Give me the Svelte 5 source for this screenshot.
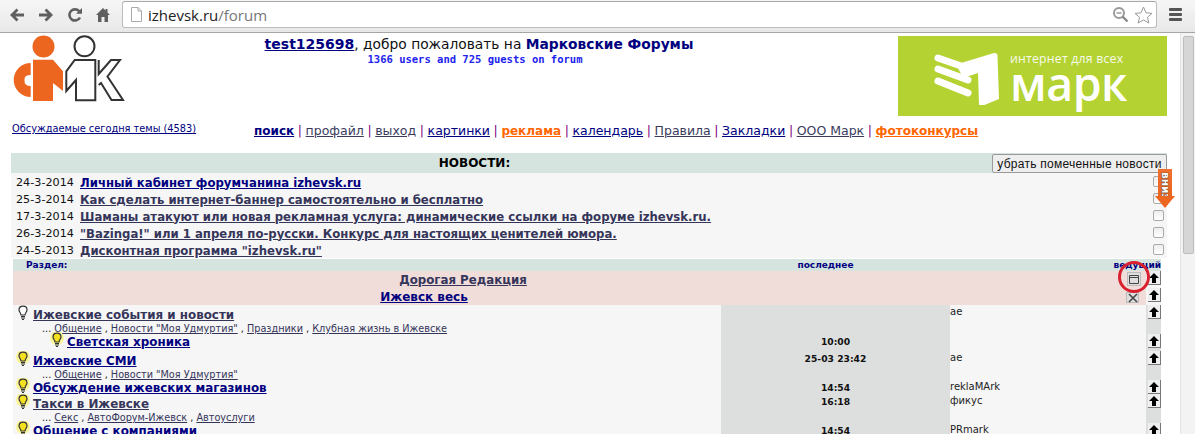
<script lang="ts">
  const navLinks = [
    { label: 'поиск', cls: 'strong' },
    { label: 'профайл', cls: 'visited' },
    { label: 'выход', cls: 'visited' },
    { label: 'картинки', cls: '' },
    { label: 'реклама', cls: 'hot' },
    { label: 'календарь', cls: '' },
    { label: 'Правила', cls: 'visited' },
    { label: 'Закладки', cls: '' },
    { label: 'ООО Марк', cls: 'visited' },
    { label: 'фотоконкурсы', cls: 'hot' }
  ];

  const news = [
    { date: '24-3-2014', title: 'Личный кабинет форумчанина izhevsk.ru', fresh: true },
    { date: '25-3-2014', title: 'Как сделать интернет-баннер самостоятельно и бесплатно' },
    { date: '17-3-2014', title: 'Шаманы атакуют или новая рекламная услуга: динамические ссылки на форуме izhevsk.ru.' },
    { date: '26-3-2014', title: '"Bazinga!" или 1 апреля по-русски. Конкурс для настоящих ценителей юмора.' },
    { date: '24-5-2013', title: 'Дисконтная программа "izhevsk.ru"' }
  ];

  const forums = [
    { title: 'Ижевские события и новости', lit: false, visited: true, h: 29, last: '', mod: 'ae',
      subs: ['Общение', 'Новости "Моя Удмуртия"', 'Праздники', 'Клубная жизнь в Ижевске'] },
    { title: 'Светская хроника', lit: true, child: true, h: 17, last: '10:00', mod: '', subs: [] },
    { title: 'Ижевские СМИ', lit: true, h: 29, last: '25-03 23:42', mod: 'ae',
      subs: ['Общение', 'Новости "Моя Удмуртия"'] },
    { title: 'Обсуждение ижевских магазинов', lit: true, h: 14, last: '14:54', mod: 'reklaMArk', subs: [] },
    { title: 'Такси в Ижевске', lit: true, visited: true, h: 29, last: '16:18', mod: 'фикус',
      subs: ['Секс', 'АвтоФорум-Ижевск', 'Автоуслуги'] },
    { title: 'Общение с компаниями', lit: true, h: 29, last: '14:54', mod: 'PRmark', subs: [] }
  ];
</script>

{#snippet upArrow()}
  <span class="up-btn">
    <svg width="10" height="10" viewBox="0 0 10 10"><path d="M5 0 L10 5 L7 5 L7 10 L3 10 L3 5 L0 5 Z" fill="#000" /></svg>
  </span>
{/snippet}

{#snippet bulb(lit)}
  <svg class="bulb" width="14" height="16" viewBox="0 0 14 16">
    {#if lit}<circle cx="7" cy="6" r="7" fill="#fbf59a" />{/if}
    <path d="M7 1.2 C4.3 1.2 3 3 3 5 C3 6.8 4.6 7.6 5 10 L9 10 C9.4 7.6 11 6.8 11 5 C11 3 9.7 1.2 7 1.2 Z" fill={lit ? '#f5e020' : '#fff'} stroke="#333" stroke-width="1.2" />
    <path d="M5 11.5 H9 M5 13 H9 M6 14.5 H8" stroke="#333" stroke-width="1.1" />
  </svg>
{/snippet}

<div class="toolbar">
  <div class="nav-icons">
    <svg width="16" height="16" viewBox="0 0 16 16"><path d="M15 8 H4 M8.5 2.5 L3 8 L8.5 13.5" fill="none" stroke="#5f5f5f" stroke-width="2.8" /></svg>
    <svg class="forward" width="16" height="16" viewBox="0 0 16 16"><path d="M1 8 H12 M7.5 2.5 L13 8 L7.5 13.5" fill="none" stroke="#5f5f5f" stroke-width="2.8" /></svg>
    <svg class="reload" width="16" height="16" viewBox="0 0 16 16"><path d="M13 10.5 A5.6 5.6 0 1 1 12.2 4.2" fill="none" stroke="#5f5f5f" stroke-width="2.6" /><path d="M9 6.8 H15 V1 Z" fill="#5f5f5f" /></svg>
    <svg class="home" width="16" height="16" viewBox="0 0 16 16"><path d="M8 1 L1 8 L3 8 L3 15 L6.5 15 L6.5 10 L9.5 10 L9.5 15 L13 15 L13 8 L15 8 L12.5 5.5 L12.5 2 L10.5 2 L10.5 3.500 Z" fill="#5f5f5f" /></svg>
  </div>
  <div class="omnibox">
    <svg width="13" height="15" viewBox="0 0 13 15"><path d="M1.5 .5 H8 L11.5 4 V14.5 H1.5 Z M8 .5 V4 H11.500" fill="#fff" stroke="#aaa" /></svg>
    <span class="url">izhevsk.ru<span class="url-path">/forum</span></span>
    <svg class="zoom-out" width="17" height="17" viewBox="0 0 17 17"><circle cx="7" cy="7" r="5" fill="none" stroke="#999" stroke-width="2" /><path d="M4.5 7 H9.5" stroke="#999" stroke-width="1.5" /><path d="M10.5 10.5 L15.5 15.5" stroke="#888" stroke-width="2.4" /></svg>
    <svg width="19" height="18" viewBox="0 0 19 18"><path d="M9.5 1 L12 6.8 L18 7.4 L13.4 11.3 L14.9 17 L9.5 14 L4.1 17 L5.6 11.3 L1 7.4 L7 6.8 Z" fill="#fff" stroke="#999" /></svg>
  </div>
  <div class="menu-btn"><i></i><i></i><i></i></div>
</div>

<div class="viewport">
  <div class="page">
    <header class="head">
      <svg class="logo" width="109" height="68" viewBox="0 3 109 68" overflow="visible">
        <circle cx="35.500" cy="13.500" r="11" fill="#ec6620" />
        <path d="M22.700 30 A17 17 0 0 0 22.700 64 V53 Q16 53 16.500 47 Q16 42 22.700 42 Z" fill="#ec6620" />
        <path d="M25 26.700 H45 L55 38.300 V58 L45 50 V68 H25 Z" fill="#ec6620" />
        <circle cx="76.500" cy="13.300" r="10" fill="none" stroke="#333" stroke-width="2" />
        <path d="M66.700 27 H87.300 V67.300 H68 V47 L58.300 58 V38.300 Z" fill="#fff" stroke="#333" stroke-width="2" />
        <path d="M90.700 27 V41 L103 27 H112 L99.500 43.500 L115 67 H103.500 L93 50 L90.700 52" fill="#fff" stroke="#333" stroke-width="2" />
      </svg>
      <div class="welcome">
        <div class="hello"><a class="user" href="#top">test125698</a>, добро пожаловать на <b>Марковские Форумы</b></div>
        <div class="online">1366 users and 725 guests on forum</div>
      </div>
      <div class="banner">
        <svg width="85" height="60" viewBox="0 0 85 60">
          <path d="M13 13 L36 21 M13 24 L43 35 M13 36 L43 48" stroke="#fff" stroke-width="7" stroke-linecap="round" fill="none" />
          <path d="M30 17 L36 18 L69 8 Q72.500 7.500 72.500 11 L74 54 L57 61 Q54 62 54 59 L53 28 L38 33 Z" fill="#fff" />
        </svg>
        <div class="brand">
          <span class="slogan">интернет для всех</span>
          <span class="brand-name">марк</span>
        </div>
      </div>
    </header>

    <div class="links">
      <a class="today" href="#top">Обсуждаемые сегодня темы (4583)</a>
      <nav class="main-nav">
        {#each navLinks as l, i}
          {#if i > 0}{' '}<span class="sep">|</span>{' '}{/if}<a class={l.cls} href="#top">{l.label}</a>
        {/each}
      </nav>
    </div>

    <section class="news">
      <div class="news-head">
        <b class="news-title">НОВОСТИ:</b>
        <button class="remove">убрать помеченные новости</button>
      </div>
      <div class="news-list">
        {#each news as n}
          <div class="news-row">
            <span class="date">{n.date}</span>
            <a class:fresh={n.fresh} href="#top">{n.title}</a>
            <input type="checkbox" />
          </div>
        {/each}
      </div>
    </section>

    <section class="forums">
      <div class="f-head">
        <span>Раздел:</span>
        <span>последнее</span>
        <span>ведущий</span>
      </div>
      <div class="cat-row">
        <div class="cat first"><a href="#top">Дорогая Редакция</a><span class="tool"><svg width="10" height="9" viewBox="0 0 10 9"><path d="M.5 .5 H9.500 V8.500 H.5 Z M.5 2.500 H9.500" fill="none" stroke="#444" /></svg></span></div>
        <span class="cat-up">{@render upArrow()}</span>
      </div>
      <div class="cat-row">
        <div class="cat second"><a href="#top">Ижевск весь</a><span class="tool small"><svg width="10" height="10" viewBox="0 0 10 10"><path d="M1 1 L9 9 M9 1 L1 9" stroke="#444" stroke-width="1.6" /></svg></span></div>
        <span class="cat-up">{@render upArrow()}</span>
      </div>
      {#each forums as f}
        <div class="f-row" style="height: {f.h}px">
          <div class="f-name" class:child={f.child}>
            <div class="f-title" class:has-subs={f.subs.length}>{@render bulb(f.lit)}<a class:seen={f.visited} href="#top">{f.title}</a></div>
            {#if f.subs.length}
              <div class="subs">...{' '}
                {#each f.subs as s, i}{#if i > 0}{' , '}{/if}<a href="#top">{s}</a>{/each}
              </div>
            {/if}
          </div>
          <div class="f-last">{f.last}</div>
          <div class="f-mod">{f.mod}</div>
          <div class="f-up">{@render upArrow()}</div>
        </div>
      {/each}
    </section>

    <div class="ring"></div>
    <div class="down">
      <span>вниз</span>
    </div>
  </div>
  <div class="scrollbar"><div class="thumb"></div></div>
</div>

<style>
  :global(body) {
    margin: 0;
    height: 434px;
    overflow: hidden;
    background: #fff;
    font-family: "DejaVu Sans", Verdana, sans-serif;
  }

  a { color: #000080; }

  .toolbar {
    height: 33px;
    box-sizing: border-box;
    display: flex;
    align-items: center;
    background: linear-gradient(#f6f6f6, #e8e8e8);
    border-bottom: 1px solid #a6a6a6;
    padding: 0 6px 3px 9px;
  }
  .nav-icons {
    display: flex;
    align-items: center;
    gap: 13px;
    width: 113px;
  }
  .nav-icons .home { margin-left: -1px; }
  .omnibox {
    flex: 1;
    height: 27px;
    box-sizing: border-box;
    margin-right: 9px;
    background: #fff;
    border: 1px solid #bcbcbc;
    border-top-color: #a8a8a8;
    border-radius: 3px;
    display: flex;
    align-items: center;
    padding: 0 3px 0 7px;
  }
  .url {
    flex: 1;
    margin-left: 5px;
    font: 15px "Open Sans", sans-serif;
    color: #222;
  }
  .url-path { color: #777; }
  .zoom-out { margin-right: 5px; }
  .menu-btn {
    width: 20px;
    display: flex;
    flex-direction: column;
    gap: 2px;
    margin: 0 0 0 3px;
  }
  .menu-btn i {
    height: 3px;
    width: 13px;
    background: #555;
    border-radius: 1px;
  }

  .viewport {
    display: flex;
    height: 401px;
    overflow: hidden;
  }
  .page {
    flex: 1;
    min-width: 0;
    position: relative;
    padding-top: 3px;
  }
  .scrollbar {
    width: 15px;
    box-sizing: border-box;
    border-left: 1px solid #e3e3e3;
    background: #f3f3f3;
    padding: 3px 1px 0 2px;
  }
  .thumb {
    height: 218px;
    background: #d6d6d6;
    border: 1px solid #bdbdbd;
    box-sizing: border-box;
    border-radius: 2px;
  }

  .head {
    display: grid;
    grid-template-columns: 125px 708px 65px 269px;
    height: 80px;
  }
  .logo {
    grid-column: 1;
    margin-left: 8px;
  }
  .welcome {
    grid-column: 2;
    text-align: center;
  }
  .hello {
    font-size: 13.800px;
    line-height: 17px;
    color: #111;
  }
  .hello b { color: #000080; }
  .user { font-weight: bold; font-size: 14px; }
  .online {
    font: bold 10.500px/12px "DejaVu Sans Mono", monospace;
    color: #2222ee;
    padding-right: 8px;
  }
  .banner {
    grid-column: 4;
    background: #b4d333;
    display: flex;
    padding: 9px 0 0 27px;
    box-sizing: border-box;
    height: 80px;
  }
  .brand {
    display: flex;
    flex-direction: column;
    color: #fff;
    font-family: "Open Sans", sans-serif;
    padding-top: 9px;
  }
  .slogan {
    font-size: 12.300px;
    line-height: 10px;
    letter-spacing: .2px;
    opacity: .9;
    white-space: nowrap;
  }
  .brand-name {
    font-size: 46.500px;
    line-height: 38px;
    font-weight: 600;
    letter-spacing: -.5px;
  }

  .links {
    display: flex;
    height: 37px;
    padding-top: 7px;
    box-sizing: border-box;
  }
  .today {
    width: 242px;
    margin-left: 12px;
    font-size: 9.800px;
    line-height: 12px;
  }
  .main-nav {
    font-size: 12.500px;
    line-height: 16px;
    white-space: nowrap;
  }
  .main-nav a { color: #000080; }
  .main-nav a.visited { color: #3b3b5e; }
  .main-nav a.strong { font-weight: bold; font-size: 12px; }
  .main-nav a.hot { font-weight: bold; font-size: 12px; color: #ff6600; }
  .sep { color: #800080; margin: 0 -.4px; }

  .news {
    margin: 0 13px 0 11px;
  }
  .news-head {
    height: 20px;
    background: #d5e4df;
    display: flex;
    align-items: center;
  }
  .news-title {
    flex: 1;
    text-align: center;
    padding-right: 54px;
    font-size: 12px;
  }
  .remove {
    width: 175px;
    height: 19px;
    padding: 0;
    margin-top: 1px;
    font: 12px "Liberation Sans", sans-serif;
    letter-spacing: .25px;
    color: #111;
    background: #eeeeee;
    border: 1px solid #9a9a9a;
    border-radius: 2px;
  }
  .news-list {
    background: #f6f6f6;
    padding-top: 1px;
    height: 85px;
    box-sizing: border-box;
  }
  .news-row {
    height: 17px;
    display: flex;
    align-items: center;
    padding: 0 3px 0 5px;
  }
  .date {
    width: 64px;
    font-size: 11.200px;
    color: #111;
  }
  .news-row a {
    flex: 1;
    font-size: 11.700px;
    font-weight: bold;
    color: #35355a;
    white-space: nowrap;
  }
  .news-row a.fresh { color: #000080; }
  .news-row input {
    appearance: none;
    width: 11px;
    height: 11px;
    margin: 0 0 3px;
    border: 1px solid #aaa;
    border-radius: 2px;
    background: linear-gradient(#ededed, #fff);
  }

  .forums {
    margin: 1px 19px 0 13px;
    font-size: 10px;
  }
  .f-head {
    height: 12px;
    background: #d5e4df;
    display: grid;
    grid-template-columns: 698px 229px 1fr;
    font-weight: bold;
    font-size: 9px;
    line-height: 13px;
    color: #000080;
  }
  .f-head span:first-child { padding-left: 13px; }
  .f-head span:nth-child(2) { text-align: center; }
  .f-head span:last-child { text-align: right; white-space: nowrap; }
  .cat-row {
    height: 17px;
    display: flex;
  }
  .cat {
    flex: 1;
    background: #f0dcd8;
    display: flex;
    position: relative;
    font-size: 11.800px;
    font-weight: bold;
    line-height: 19px;
    justify-content: center;
  }
  .cat.first a { color: #35355a; margin-right: 233px; }
  .cat.second a { margin-right: 311px; font-size: 12px; }
  .tool {
    position: absolute;
    right: 5px;
    top: 1px;
    width: 14px;
    height: 14px;
    background: #dedede;
    border: 1px solid #bbb;
    box-sizing: border-box;
    display: flex;
    align-items: center;
    justify-content: center;
  }
  .tool.small {
    right: 7px;
    top: 4px;
    width: 13px;
    height: 11px;
  }
  .cat-up {
    width: 15px;
    padding-left: 2px;
    box-sizing: border-box;
    background: #f6f6f6;
  }
  .up-btn {
    display: flex;
    width: 13px;
    height: 14px;
    align-items: center;
    justify-content: center;
    background: #efefef;
    border-right: 1px solid #777;
    border-bottom: 1px solid #777;
    box-sizing: border-box;
  }
  .f-row {
    display: grid;
    grid-template-columns: 708px 229px 196px 15px;
    background: #f6f6f6;
  }
  .f-name { padding-left: 3px; }
  .f-name.child { padding-left: 37px; }
  .f-title {
    display: flex;
    height: 15px;
    align-items: center;
    gap: 3px;
    font-size: 11.900px;
    font-weight: bold;
    white-space: nowrap;
  }
  .f-title.has-subs { margin-top: 2px; }
  .f-title a.seen { color: #35355a; }
  .bulb { flex: none; margin-top: -4px; }
  .subs {
    margin-left: 26px;
    font-size: 9.700px;
    line-height: 13px;
    white-space: nowrap;
    color: #222;
  }
  .subs a { color: #35355a; }
  .f-last {
    background: #dddfde;
    text-align: center;
    font-weight: bold;
    font-size: 9.200px;
    line-height: 14px;
    padding-top: 1px;
    color: #111;
  }
  .f-mod {
    line-height: 13px;
    color: #222;
  }
  .f-up {
    background: #dddfde;
    padding-left: 2px;
  }

  .ring {
    position: absolute;
    left: 1118px;
    top: 228px;
    width: 26px;
    height: 26px;
    border: 3px solid #d8202e;
    border-radius: 50%;
  }
  .down {
    position: absolute;
    left: 1155px;
    top: 136px;
    width: 21px;
    height: 39px;
    background: linear-gradient(#ef7030, #ec6620) 3px 0 / 14px 27px no-repeat;
    display: flex;
    justify-content: center;
  }
  .down::after {
    content: "";
    position: absolute;
    left: 0;
    top: 27px;
    border-left: 10.500px solid transparent;
    border-right: 10.500px solid transparent;
    border-top: 12px solid #ec6620;
  }
  .down span {
    writing-mode: vertical-rl;
    font-size: 10.500px;
    font-weight: bold;
    line-height: 15px;
    padding-top: 3px;
    color: #fff;
    text-shadow: 0 0 1px #333, 0 0 1px #333;
  }
</style>
